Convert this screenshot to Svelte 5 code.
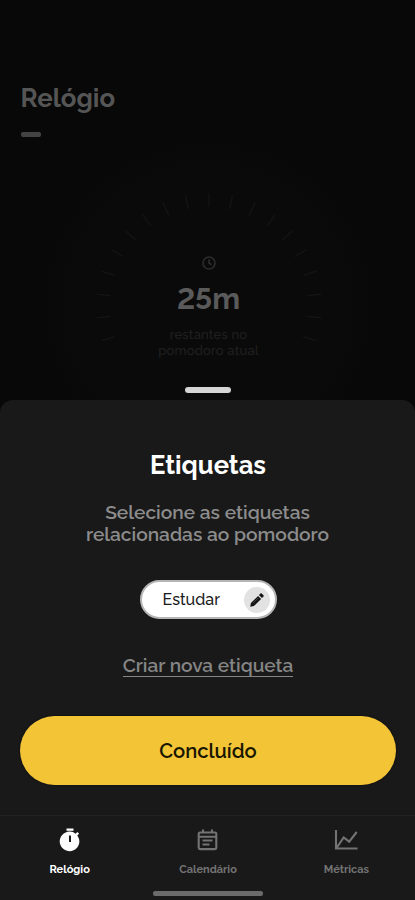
<script>
  const ticks = Array.from({ length: 19 }, (_, i) => (i - 9) * 12);
</script>

<main>
  <section class="clock">
    <h1>Relógio</h1>
    <div class="dash"></div>
    <div class="dial">
      <svg class="ticks" width="300" height="240" viewBox="0 0 300 240">
        {#each ticks as angle}
          <line x1="150" y1="33" x2="150" y2="47" transform="rotate({angle} 150 146)" />
        {/each}
      </svg>
      <div class="reading">
        <svg class="mini" width="14" height="14" viewBox="0 0 14 14">
          <circle cx="7" cy="7" r="6" />
          <path d="M7 3.3V7l2.5 1.8" />
        </svg>
        <strong>25m</strong>
        <p>restantes no<br />pomodoro atual</p>
      </div>
    </div>
    <div class="handle"></div>
  </section>

  <section class="sheet">
    <h2>Etiquetas</h2>
    <p class="hint">Selecione as etiquetas<br />relacionadas ao pomodoro</p>
    <div class="tag">
      <span>Estudar</span>
      <button class="edit" aria-label="Editar">
        <svg width="16" height="16" viewBox="0 0 16 16">
          <path d="M1.2 14.8l.7-3.7 7.2-7.2 3 3-7.2 7.2zM9.9 3.1l1.4-1.4c.5-.5 1.1-.5 1.6 0l1.4 1.4c.5.5.5 1.1 0 1.6l-1.4 1.4z" />
          <path class="shine" d="M3.9 11.2l5.3-5.3" />
        </svg>
      </button>
    </div>
    <a class="create" href="#nova">Criar nova etiqueta</a>
    <button class="done">Concluído</button>
  </section>

  <nav>
    <div class="item active">
      <svg width="24" height="24" viewBox="0 0 24 24">
        <path d="M8.500 .5h7v2.300h-7zM19.300 7.400l1.800-1.600-1.700-1.700-1.800 1.600A9.800 9.800 0 0 0 12 3.600a9.800 9.800 0 1 0 7.300 3.800zM13 14h-2V7.500h2z" />
      </svg>
      <span>Relógio</span>
    </div>
    <div class="item">
      <svg width="24" height="24" viewBox="0 0 24 24">
        <path class="line" d="M4 4.500h15a1.300 1.300 0 0 1 1.300 1.300v14a1.300 1.300 0 0 1-1.300 1.300H4a1.300 1.300 0 0 1-1.300-1.300v-14A1.300 1.300 0 0 1 4 4.500zM2.700 8.700h17.600M6.500 12.500h10M6.500 16.500h7M7 1.500v3M16 1.500v3" />
      </svg>
      <span>Calendário</span>
    </div>
    <div class="item">
      <svg width="24" height="24" viewBox="0 0 24 24">
        <path class="line" d="M2 2v18.500H23.500M2.500 20l7.200-10.500 5.500 4.200L22.700 4" />
      </svg>
      <span>Métricas</span>
    </div>
    <div class="home"></div>
  </nav>
</main>

<style>
  :global(body) { background: #191919; }
  main {
    width: 415px;
    height: 900px;
    display: flex;
    flex-direction: column;
    overflow: hidden;
    background: #191919;
    font-family: Raleway, Lato, sans-serif;
    font-variant-numeric: lining-nums;
    color: #8c8c8c;
  }
  h1, h2, p { margin: 0; }
  button { border: 0; padding: 0; font: inherit; }
  .clock {
    height: 420px;
    flex: none;
    box-sizing: border-box;
    padding-top: 82px;
    margin-bottom: -20px;
    background: radial-gradient(circle at 208px 306px, #0a0a0a 0, #0a0a0a 130px, #080808 170px);
    display: flex;
    flex-direction: column;
  }
  h1 {
    margin-left: 20.500px;
    font-size: 25.800px;
    line-height: 32px;
    font-weight: 700;
    color: #555;
  }
  .dash {
    width: 20px;
    height: 5px;
    margin: 18px 0 0 21px;
    border-radius: 2px;
    background: #434343;
  }
  .dial {
    display: grid;
    width: 300px;
    height: 227px;
    margin: 23px 0 0 58.500px;
  }
  .ticks, .reading { grid-area: 1 / 1; }
  .ticks line { stroke: #151515; stroke-width: 1.300; }
  .reading {
    display: flex;
    flex-direction: column;
    align-items: center;
    padding-top: 96px;
    text-align: center;
  }
  .mini { fill: none; stroke: #2b2b2b; stroke-width: 1.700; }
  .reading strong {
    margin-top: 12px;
    font-size: 30px;
    line-height: 34px;
    font-weight: 700;
    color: #5a5a5a;
  }
  .reading p {
    margin-top: 11px;
    font-size: 13px;
    line-height: 15.500px;
    font-weight: 500;
    color: #202020;
    letter-spacing: .2px;
    white-space: nowrap;
  }
  .handle {
    width: 46px;
    height: 6px;
    margin: 0 0 0 185px;
    border-radius: 3px;
    background: #d5d5d5;
  }
  .sheet {
    height: 415px;
    flex: none;
    display: flex;
    flex-direction: column;
    align-items: center;
    box-sizing: border-box;
    padding-top: 49px;
    border-radius: 13px 13px 0 0;
    background: #191919;
  }
  h2 {
    margin-left: 1px;
    font-size: 25.600px;
    line-height: 32px;
    font-weight: 700;
    color: #fff;
  }
  .hint {
    margin-top: 20px;
    font-size: 19.150px;
    line-height: 22px;
    font-weight: 600;
    text-align: center;
    white-space: nowrap;
  }
  .tag {
    display: flex;
    align-items: center;
    justify-content: space-between;
    box-sizing: border-box;
    width: 137px;
    height: 39px;
    margin: 35px 0 0 1px;
    padding: 0 5px 0 21px;
    border: 2px solid #b5b5b5;
    border-radius: 20px;
    background: #fff;
    color: #1a1a1a;
    font-size: 16px;
    font-weight: 500;
    line-height: 20px;
  }
  .edit {
    display: grid;
    place-items: center;
    width: 26px;
    height: 26px;
    border-radius: 50%;
    background: #e2e2e2;
    fill: #151515;
  }
  .shine { stroke: #777; stroke-width: .5; }
  .create {
    margin: 35px 0 0 1px;
    border-bottom: 1.500px solid #858585;
    color: #858585;
    font-size: 19.100px;
    line-height: 22px;
    font-weight: 600;
    text-decoration: none;
    white-space: nowrap;
  }
  .done {
    width: 376px;
    height: 69px;
    margin: 39px 0 0 1px;
    border-radius: 35px;
    background: #f2c436;
    box-shadow: 0 0 2px #080810;
    color: #191600;
    font-size: 20.200px;
    font-weight: 600;
  }
  nav {
    flex: 1;
    display: flex;
    flex-wrap: wrap;
    justify-content: center;
    align-content: flex-start;
    border-top: 1px solid #232323;
    color: #737373;
  }
  .item {
    display: flex;
    flex-direction: column;
    align-items: center;
    width: 33.333%;
    height: 74.500px;
    padding: 12px 0 0 1px;
    box-sizing: border-box;
    font-size: 11px;
    line-height: 14px;
    font-weight: 700;
    fill: currentColor;
  }
  .item span { margin-top: 10.500px; }
  .item.active { color: #fff; }
  .line { fill: none; stroke: currentColor; stroke-width: 2.100; }
  .home {
    width: 110px;
    height: 5px;
    border-radius: 2px;
    background: #6b6b6b;
  }
</style>
